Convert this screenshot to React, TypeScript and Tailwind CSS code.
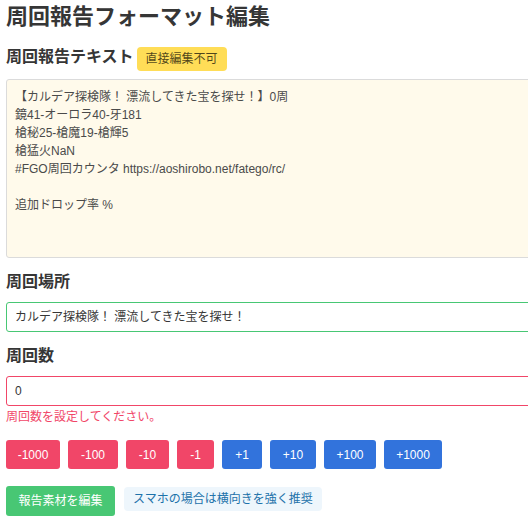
const report = `【カルデア探検隊！ 漂流してきた宝を探せ！】0周
鏡41-オーロラ40-牙181
槍秘25-槍魔19-槍輝5
槍猛火NaN
#FGO周回カウンタ https://aoshirobo.net/fatego/rc/

追加ドロップ率 %`;

const steps = [
  { label: "-1000", w: "w-[54px]", tone: "bg-[#f14668]" },
  { label: "-100", w: "w-[50px]", tone: "bg-[#f14668]" },
  { label: "-10", w: "w-[43px]", tone: "bg-[#f14668]" },
  { label: "-1", w: "w-[37px]", tone: "bg-[#f14668]" },
  { label: "+1", w: "w-[40px]", tone: "bg-[#3273dc]" },
  { label: "+10", w: "w-[46px]", tone: "bg-[#3273dc]" },
  { label: "+100", w: "w-[52px]", tone: "bg-[#3273dc]" },
  { label: "+1000", w: "w-[58px]", tone: "bg-[#3273dc]" },
];

export default function App() {
  return (
    <div
      className="min-h-screen w-full overflow-hidden bg-white text-[#363636]"
      style={{ fontFamily: '"Liberation Sans", "Noto Sans CJK JP", sans-serif' }}
    >
      <div className="w-[900px] px-[6px]">
        {/* Title */}
        <h1 className="text-[22px] font-bold leading-[33px]">周回報告フォーマット編集</h1>

        {/* Report text */}
        <div className="mt-[12px] flex items-start gap-[3px]">
          <h2 className="text-[16px] font-bold leading-[24px]">周回報告テキスト</h2>
          <span className="mt-[2px] inline-flex h-[24px] items-center rounded-[4px] bg-[#ffdd57] px-[9px] text-[12px] text-black/70">
            直接編集不可
          </span>
        </div>
        <textarea
          readOnly
          value={report}
          className="mt-[8px] block h-[179px] w-full resize-none rounded-[3px] border border-[#dbdbdb] bg-[#fffaeb] px-[8px] py-[8px] text-[12px] leading-[18px] text-[#4a4a4a] outline-none"
        />

        {/* Place */}
        <label className="mt-[12px] block text-[16px] font-bold leading-[24px]">周回場所</label>
        <div className="mt-[8px] flex h-[30px] items-center rounded-[3px] border border-[#48c774] px-[8px] text-[12px] text-[#363636]">
          カルデア探検隊！ 漂流してきた宝を探せ！
        </div>

        {/* Count */}
        <label className="mt-[12px] block text-[16px] font-bold leading-[24px]">周回数</label>
        <div className="mt-[8px] flex h-[30px] items-center rounded-[3px] border border-[#f14668] px-[8px] text-[12px] text-[#363636]">
          0
        </div>
        <p className="mt-[2px] text-[12px] leading-[18px] text-[#f14668]">周回数を設定してください。</p>

        <div className="mt-[14px] flex gap-[8px]">
          {steps.map((s) => (
            <button
              key={s.label}
              className={`flex h-[29px] items-center justify-center rounded-[3px] text-[12px] text-white ${s.w} ${s.tone}`}
            >
              {s.label}
            </button>
          ))}
        </div>

        <div className="mt-[17px] flex items-start gap-[9px]">
          <button className="flex h-[30px] w-[109px] items-center justify-center rounded-[3px] bg-[#48c774] text-[12px] text-white">
            報告素材を編集
          </button>
          <span className="mt-[1px] inline-flex h-[24px] items-center rounded-[4px] bg-[#eef6fc] px-[9px] text-[12px] text-[#1d72aa]">
            スマホの場合は横向きを強く推奨
          </span>
        </div>
      </div>
    </div>
  );
}
